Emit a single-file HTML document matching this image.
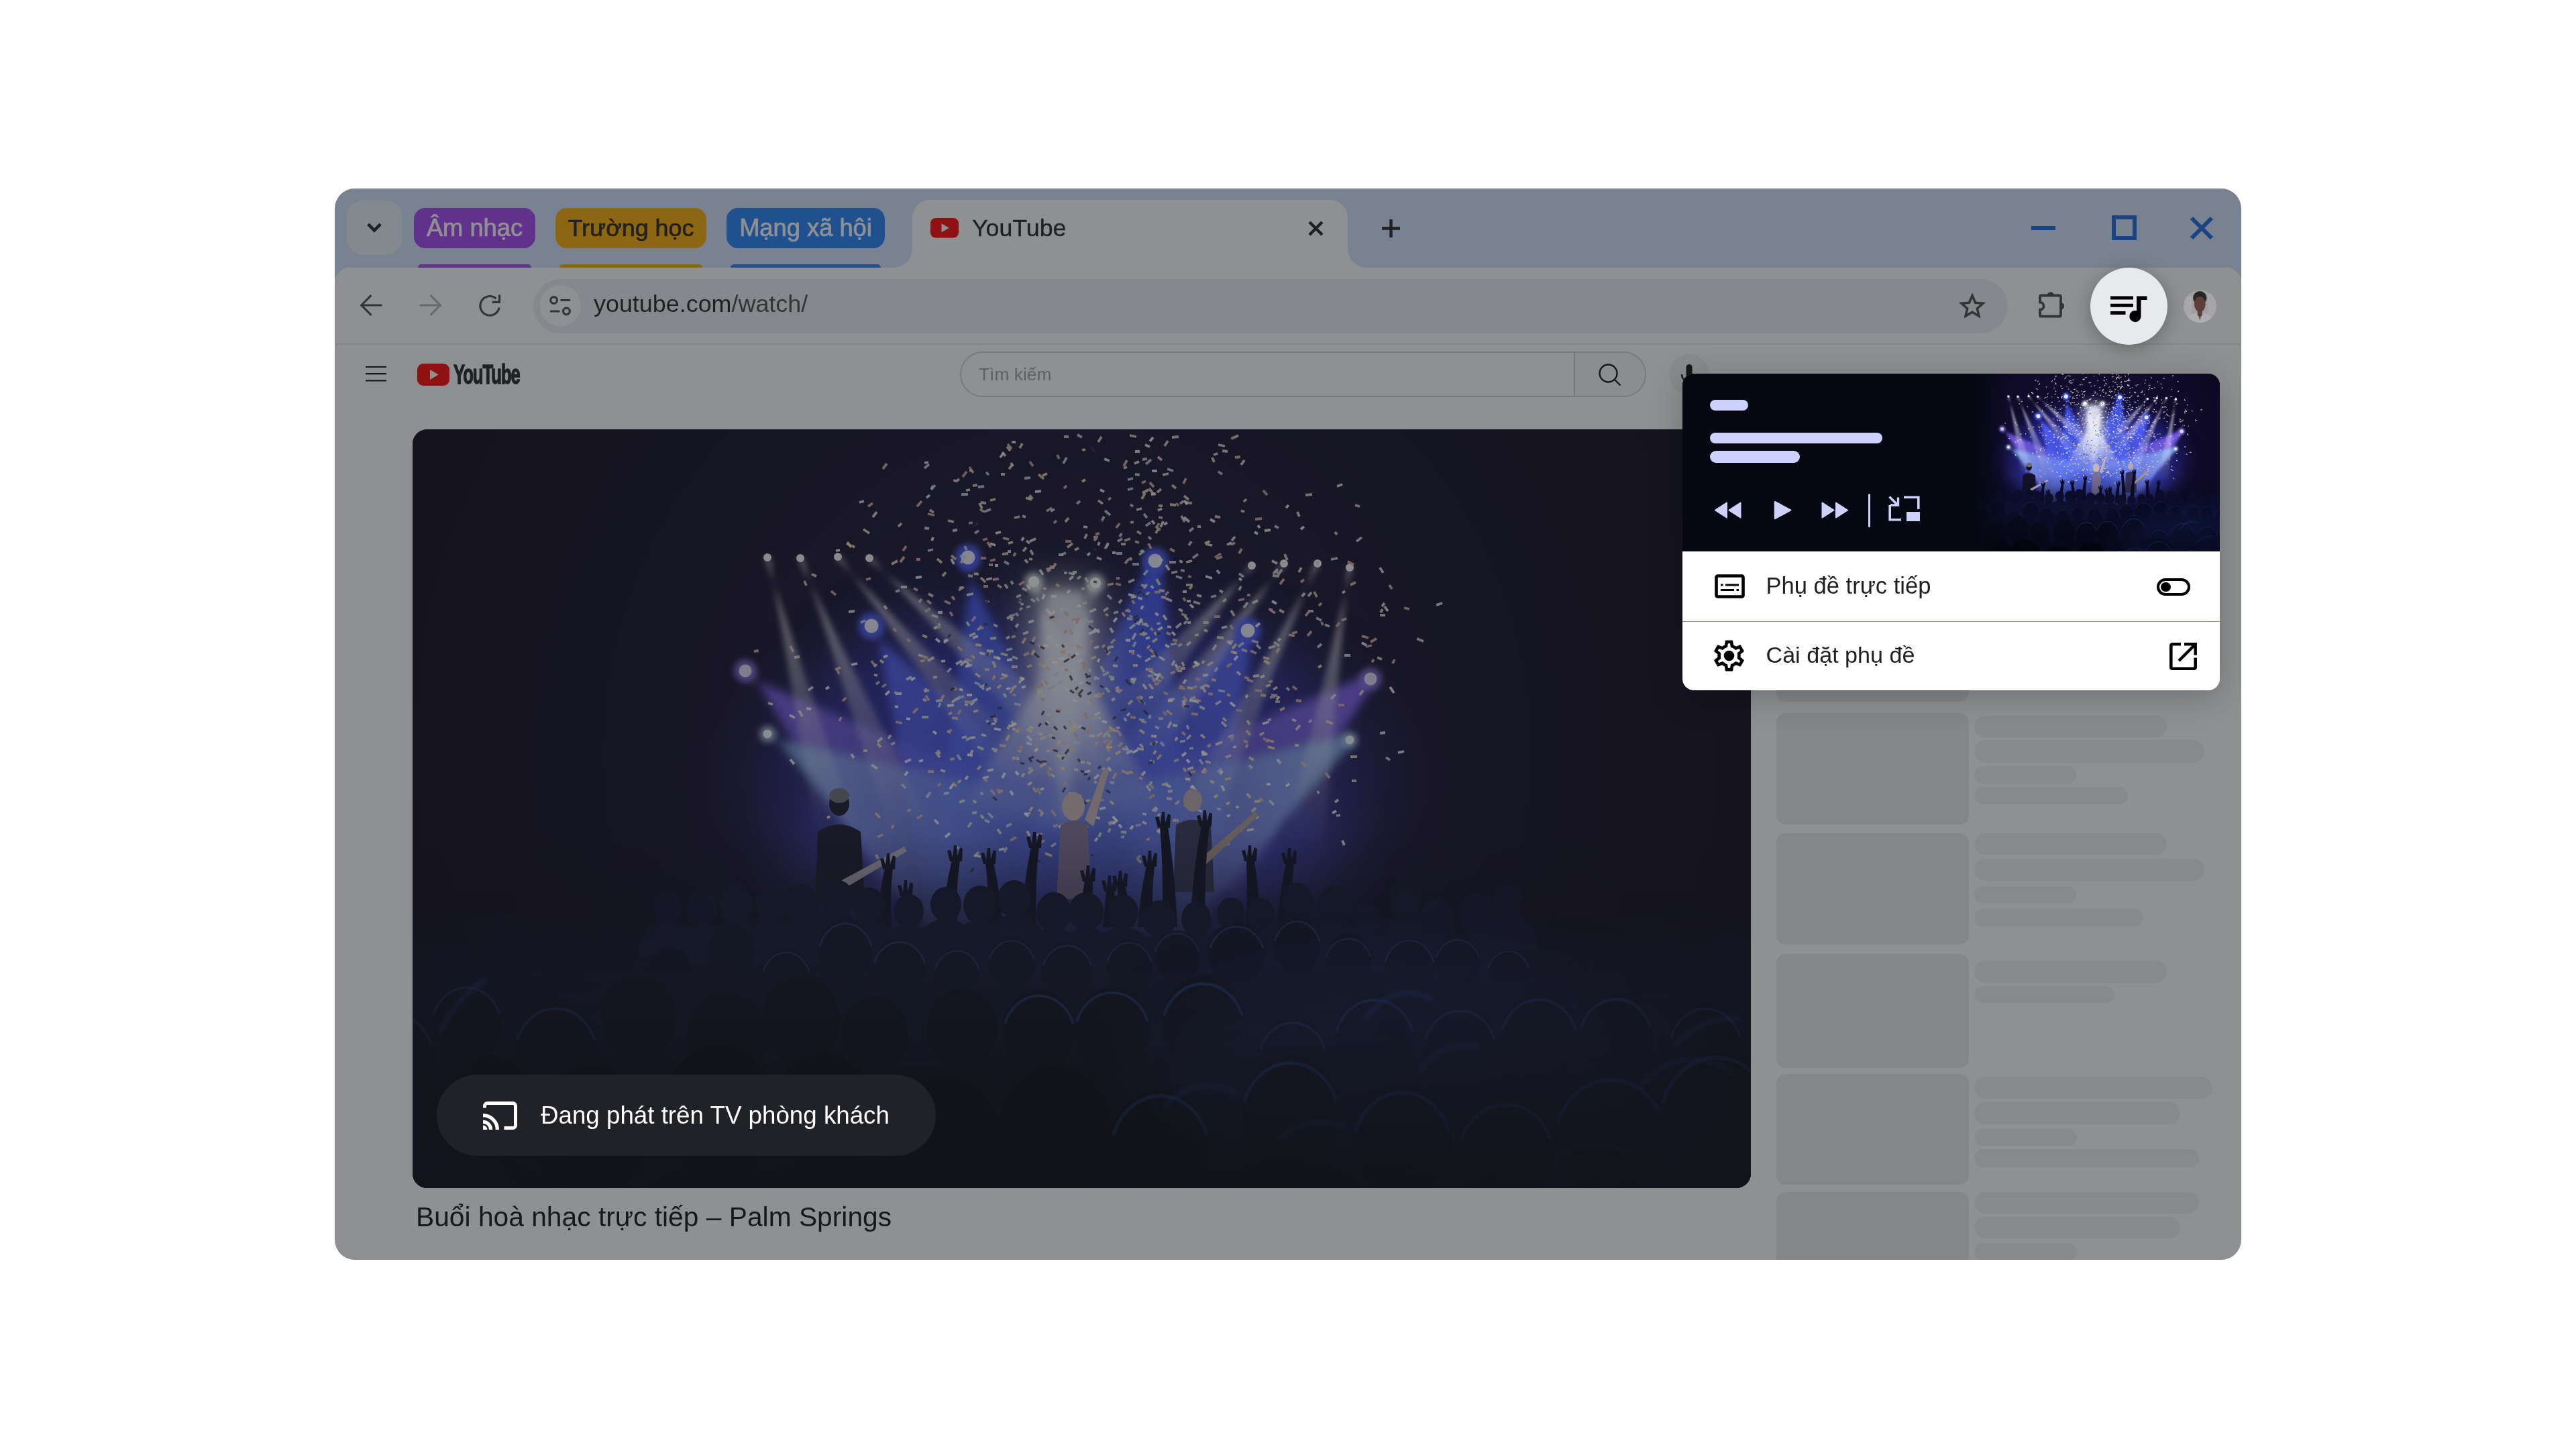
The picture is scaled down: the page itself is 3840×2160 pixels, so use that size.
<!DOCTYPE html>
<html lang="vi"><head><meta charset="utf-8"><title>YouTube</title>
<style>
*{box-sizing:border-box;margin:0;padding:0}
html,body{width:3840px;height:2160px;overflow:hidden;background:#fff}
body{position:relative;font-family:"Liberation Sans",sans-serif;color:#1f1f1f}
.abs{position:absolute}
svg{position:absolute;overflow:visible}
.win{position:absolute;left:499px;top:281px;width:2842px;height:1597px;border-radius:30px;overflow:hidden;background:#d3e3fd}
.in{position:absolute;left:-499px;top:-281px;width:3840px;height:2160px}
.scrim{position:absolute;left:0;top:0;width:100%;height:100%;background:rgba(32,33,36,.5)}
.t{position:absolute;white-space:nowrap;line-height:1}
.chip{position:absolute;top:310px;height:60px;border-radius:17px;text-align:center;font-size:36.3px;line-height:60px;white-space:nowrap;-webkit-text-stroke:.7px currentColor}
.ul{position:absolute;top:393.5px;height:12px;border-radius:5px}
.sk{position:absolute;background:#eaeaea;border-radius:14px}
.sb{position:absolute;background:#f1f1f1;border-radius:12px}

</style></head><body>
<svg width="0" height="0" style="position:absolute"><defs><filter id="b6" x="-30%" y="-30%" width="160%" height="160%"><feGaussianBlur stdDeviation="5"/></filter><filter id="b10" x="-20%" y="-20%" width="140%" height="140%"><feGaussianBlur stdDeviation="7"/></filter><filter id="b30" x="-30%" y="-30%" width="160%" height="160%"><feGaussianBlur stdDeviation="30"/></filter><filter id="b50" x="-30%" y="-30%" width="160%" height="160%"><feGaussianBlur stdDeviation="50"/></filter><filter id="b3" x="-50%" y="-50%" width="200%" height="200%"><feGaussianBlur stdDeviation="3"/></filter><radialGradient id="cg2" cx="975" cy="480" r="1150" gradientUnits="userSpaceOnUse"><stop offset="0" stop-color="#17123a"/><stop offset=".5" stop-color="#0f0a27"/><stop offset="1" stop-color="#0a0619"/></radialGradient><linearGradient id="fadeb" x1="0" y1="600" x2="0" y2="900" gradientUnits="userSpaceOnUse"><stop offset="0" stop-color="#060716" stop-opacity="0"/><stop offset="1" stop-color="#060716" stop-opacity=".8"/></linearGradient><radialGradient id="vg" cx="985" cy="470" r="1100" gradientUnits="userSpaceOnUse"><stop offset=".5" stop-color="#07051a" stop-opacity="0"/><stop offset="1" stop-color="#07051a" stop-opacity=".5"/></radialGradient><linearGradient id="g1" x1="496" y1="360" x2="863" y2="643" gradientUnits="userSpaceOnUse"><stop offset="0" stop-color="#7050f0" stop-opacity="1"/><stop offset="0.5" stop-color="#7050f0" stop-opacity="0.55"/><stop offset="1" stop-color="#7050f0" stop-opacity="0"/></linearGradient><linearGradient id="g2" x1="1428" y1="372" x2="1073" y2="639" gradientUnits="userSpaceOnUse"><stop offset="0" stop-color="#7050f0" stop-opacity="1"/><stop offset="0.5" stop-color="#7050f0" stop-opacity="0.55"/><stop offset="1" stop-color="#7050f0" stop-opacity="0"/></linearGradient><linearGradient id="g3" x1="684" y1="293" x2="918" y2="667" gradientUnits="userSpaceOnUse"><stop offset="0" stop-color="#3848ff" stop-opacity="1"/><stop offset="0.5" stop-color="#3848ff" stop-opacity="0.60"/><stop offset="1" stop-color="#3848ff" stop-opacity="0"/></linearGradient><linearGradient id="g4" x1="1245" y1="300" x2="1042" y2="659" gradientUnits="userSpaceOnUse"><stop offset="0" stop-color="#3848ff" stop-opacity="1"/><stop offset="0.5" stop-color="#3848ff" stop-opacity="0.60"/><stop offset="1" stop-color="#3848ff" stop-opacity="0"/></linearGradient><linearGradient id="g5" x1="828" y1="191" x2="919" y2="726" gradientUnits="userSpaceOnUse"><stop offset="0" stop-color="#2c48ff" stop-opacity="1"/><stop offset="0.5" stop-color="#2c48ff" stop-opacity="0.60"/><stop offset="1" stop-color="#2c48ff" stop-opacity="0"/></linearGradient><linearGradient id="g6" x1="1107" y1="196" x2="1016" y2="724" gradientUnits="userSpaceOnUse"><stop offset="0" stop-color="#2c48ff" stop-opacity="1"/><stop offset="0.5" stop-color="#2c48ff" stop-opacity="0.60"/><stop offset="1" stop-color="#2c48ff" stop-opacity="0"/></linearGradient><linearGradient id="g7" x1="529" y1="454" x2="961" y2="686" gradientUnits="userSpaceOnUse"><stop offset="0" stop-color="#78b0f0" stop-opacity="0.9"/><stop offset="0.4" stop-color="#78b0f0" stop-opacity="0.41"/><stop offset="1" stop-color="#78b0f0" stop-opacity="0"/></linearGradient><linearGradient id="g8" x1="1397" y1="463" x2="970" y2="684" gradientUnits="userSpaceOnUse"><stop offset="0" stop-color="#78b0f0" stop-opacity="0.9"/><stop offset="0.4" stop-color="#78b0f0" stop-opacity="0.41"/><stop offset="1" stop-color="#78b0f0" stop-opacity="0"/></linearGradient><linearGradient id="g9" x1="926" y1="227" x2="1052" y2="598" gradientUnits="userSpaceOnUse"><stop offset="0" stop-color="#f0f5ff" stop-opacity="1"/><stop offset="0.5" stop-color="#f0f5ff" stop-opacity="0.65"/><stop offset="1" stop-color="#f0f5ff" stop-opacity="0"/></linearGradient><linearGradient id="g10" x1="1018" y1="229" x2="888" y2="597" gradientUnits="userSpaceOnUse"><stop offset="0" stop-color="#f0f5ff" stop-opacity="1"/><stop offset="0.5" stop-color="#f0f5ff" stop-opacity="0.65"/><stop offset="1" stop-color="#f0f5ff" stop-opacity="0"/></linearGradient><linearGradient id="g11" x1="529" y1="191" x2="632" y2="599" gradientUnits="userSpaceOnUse"><stop offset="0" stop-color="#ece8f4" stop-opacity="0.85"/><stop offset="0.5" stop-color="#ece8f4" stop-opacity="0.38"/><stop offset="1" stop-color="#ece8f4" stop-opacity="0"/></linearGradient><linearGradient id="g12" x1="578" y1="192" x2="742" y2="598" gradientUnits="userSpaceOnUse"><stop offset="0" stop-color="#ece8f4" stop-opacity="0.85"/><stop offset="0.5" stop-color="#ece8f4" stop-opacity="0.38"/><stop offset="1" stop-color="#ece8f4" stop-opacity="0"/></linearGradient><linearGradient id="g13" x1="634" y1="190" x2="891" y2="499" gradientUnits="userSpaceOnUse"><stop offset="0" stop-color="#ece8f4" stop-opacity="0.85"/><stop offset="0.5" stop-color="#ece8f4" stop-opacity="0.38"/><stop offset="1" stop-color="#ece8f4" stop-opacity="0"/></linearGradient><linearGradient id="g14" x1="681" y1="192" x2="954" y2="447" gradientUnits="userSpaceOnUse"><stop offset="0" stop-color="#ece8f4" stop-opacity="0.85"/><stop offset="0.5" stop-color="#ece8f4" stop-opacity="0.38"/><stop offset="1" stop-color="#ece8f4" stop-opacity="0"/></linearGradient><linearGradient id="g15" x1="1397" y1="206" x2="1328" y2="625" gradientUnits="userSpaceOnUse"><stop offset="0" stop-color="#ece8f4" stop-opacity="0.85"/><stop offset="0.5" stop-color="#ece8f4" stop-opacity="0.38"/><stop offset="1" stop-color="#ece8f4" stop-opacity="0"/></linearGradient><linearGradient id="g16" x1="1349" y1="200" x2="1167" y2="585" gradientUnits="userSpaceOnUse"><stop offset="0" stop-color="#ece8f4" stop-opacity="0.85"/><stop offset="0.5" stop-color="#ece8f4" stop-opacity="0.38"/><stop offset="1" stop-color="#ece8f4" stop-opacity="0"/></linearGradient><linearGradient id="g17" x1="1299" y1="200" x2="1083" y2="483" gradientUnits="userSpaceOnUse"><stop offset="0" stop-color="#ece8f4" stop-opacity="0.85"/><stop offset="0.5" stop-color="#ece8f4" stop-opacity="0.38"/><stop offset="1" stop-color="#ece8f4" stop-opacity="0"/></linearGradient><linearGradient id="g18" x1="1251" y1="203" x2="1059" y2="429" gradientUnits="userSpaceOnUse"><stop offset="0" stop-color="#ece8f4" stop-opacity="0.85"/><stop offset="0.5" stop-color="#ece8f4" stop-opacity="0.38"/><stop offset="1" stop-color="#ece8f4" stop-opacity="0"/></linearGradient><linearGradient id="fun" x1="0" y1="225" x2="0" y2="540" gradientUnits="userSpaceOnUse"><stop offset="0" stop-color="#f4f7ff" stop-opacity=".95"/><stop offset=".5" stop-color="#e3e9ff" stop-opacity=".65"/><stop offset="1" stop-color="#c5ccff" stop-opacity="0"/></linearGradient><linearGradient id="g19" x1="0" y1="720" x2="0" y2="900" gradientUnits="userSpaceOnUse"><stop offset="0" stop-color="#2a3a8a" stop-opacity="0"/><stop offset=".5" stop-color="#2a3a8a" stop-opacity="0.1"/><stop offset="1" stop-color="#2a3a8a" stop-opacity="0"/></linearGradient><linearGradient id="g20" x1="0" y1="800" x2="0" y2="1000" gradientUnits="userSpaceOnUse"><stop offset="0" stop-color="#22357a" stop-opacity="0"/><stop offset=".5" stop-color="#22357a" stop-opacity="0.08"/><stop offset="1" stop-color="#22357a" stop-opacity="0"/></linearGradient><linearGradient id="g21" x1="0" y1="930" x2="0" y2="1100" gradientUnits="userSpaceOnUse"><stop offset="0" stop-color="#1a2a66" stop-opacity="0"/><stop offset=".5" stop-color="#1a2a66" stop-opacity="0.06"/><stop offset="1" stop-color="#1a2a66" stop-opacity="0"/></linearGradient><linearGradient id="botd" x1="0" y1="820" x2="0" y2="1131" gradientUnits="userSpaceOnUse"><stop offset="0" stop-color="#02030a" stop-opacity="0"/><stop offset="1" stop-color="#02030a" stop-opacity=".7"/></linearGradient></defs><symbol id="concert" viewBox="0 0 1995 1131"><rect width="1995" height="1131" fill="url(#cg2)"/>
<ellipse cx="975" cy="520" rx="470" ry="250" fill="#3430b0" opacity=".45" filter="url(#b50)"/>
<ellipse cx="975" cy="610" rx="400" ry="110" fill="#4a5cf0" opacity=".5" filter="url(#b50)"/>
<ellipse cx="800" cy="440" rx="190" ry="150" fill="#2a38d8" opacity=".4" filter="url(#b50)"/><ellipse cx="1150" cy="445" rx="190" ry="150" fill="#2a38d8" opacity=".4" filter="url(#b50)"/>
<g filter="url(#b10)" style="mix-blend-mode:screen"><polygon points="491,366 1018,588 708,698 501,354" fill="url(#g1)"/><polygon points="1423,366 917,584 1228,694 1433,378" fill="url(#g2)"/><polygon points="677,297 1070,642 766,692 691,289" fill="url(#g3)"/><polygon points="1238,296 890,634 1195,684 1252,304" fill="url(#g4)"/><polygon points="819,193 1073,726 764,726 837,189" fill="url(#g5)"/><polygon points="1098,194 862,724 1171,724 1116,198" fill="url(#g6)"/><polygon points="526,460 1122,589 800,783 532,448" fill="url(#g7)"/><polygon points="1394,457 809,591 1131,776 1400,469" fill="url(#g8)"/><polygon points="918,230 1136,598 968,598 934,224" fill="url(#g9)"/><polygon points="1010,226 976,597 800,597 1026,232" fill="url(#g10)"/></g>
<polygon points="945,240 1000,241 1030,520 915,520" fill="url(#fun)" filter="url(#b10)" opacity=".8"/>
<g filter="url(#b6)" style="mix-blend-mode:screen"><polygon points="526,192 661,592 603,607 532,190" fill="url(#g11)"/><polygon points="575,193 770,586 714,609 581,191" fill="url(#g12)"/><polygon points="632,192 914,480 868,519 636,188" fill="url(#g13)"/><polygon points="679,194 974,425 934,469 683,190" fill="url(#g14)"/><polygon points="1394,206 1358,629 1298,620 1400,206" fill="url(#g15)"/><polygon points="1346,199 1194,598 1140,572 1352,201" fill="url(#g16)"/><polygon points="1297,198 1107,502 1059,465 1301,202" fill="url(#g17)"/><polygon points="1249,201 1081,449 1036,410 1253,205" fill="url(#g18)"/></g>
<polygon points="932,235 1012,237 1060,590 885,590" fill="url(#fun)" filter="url(#b30)"/>
<circle cx="529" cy="191" r="6" fill="#f4f0f4"/><circle cx="578" cy="192" r="6" fill="#f4f0f4"/><circle cx="634" cy="190" r="6" fill="#f4f0f4"/><circle cx="681" cy="192" r="6" fill="#f4f0f4"/><circle cx="1251" cy="203" r="6" fill="#f4f0f4"/><circle cx="1299" cy="200" r="6" fill="#f4f0f4"/><circle cx="1349" cy="200" r="6" fill="#f4f0f4"/><circle cx="1397" cy="206" r="6" fill="#f4f0f4"/><circle cx="828" cy="191" r="20" fill="#4a5cff" opacity=".9" filter="url(#b6)"/><circle cx="828" cy="191" r="10.5" fill="#e6ebff"/><circle cx="1107" cy="196" r="20" fill="#4a5cff" opacity=".9" filter="url(#b6)"/><circle cx="1107" cy="196" r="10.5" fill="#e6ebff"/><circle cx="684" cy="293" r="20" fill="#4a5cff" opacity=".9" filter="url(#b6)"/><circle cx="684" cy="293" r="10.5" fill="#e6ebff"/><circle cx="1245" cy="300" r="20" fill="#4a5cff" opacity=".9" filter="url(#b6)"/><circle cx="1245" cy="300" r="10.5" fill="#e6ebff"/><circle cx="926" cy="227" r="14" fill="#fff" opacity=".7" filter="url(#b6)"/><circle cx="926" cy="227" r="8" fill="#fff"/><circle cx="1018" cy="229" r="14" fill="#fff" opacity=".7" filter="url(#b6)"/><circle cx="1018" cy="229" r="8" fill="#fff"/><circle cx="496" cy="360" r="17" fill="#8a78e8" opacity=".8" filter="url(#b6)"/><circle cx="496" cy="360" r="9.5" fill="#ddd6f6"/><circle cx="1428" cy="372" r="17" fill="#8a78e8" opacity=".8" filter="url(#b6)"/><circle cx="1428" cy="372" r="9.5" fill="#ddd6f6"/><circle cx="529" cy="454" r="12" fill="#cfe6fa" opacity=".7" filter="url(#b6)"/><circle cx="529" cy="454" r="6.5" fill="#eef6fd"/><circle cx="1397" cy="463" r="12" fill="#cfe6fa" opacity=".7" filter="url(#b6)"/><circle cx="1397" cy="463" r="6.5" fill="#eef6fd"/>
<path d="M1053 259l4 -5M1386 244l4 -3M867 431l3 6M974 389l6 2M1221 166l5 -6M1040 373l6 -1M768 345l9 -5M979 224l6 -5M703 263l4 5M985 344l5 -8M1044 352l7 1M1389 337l9 -0M845 110l4 8M806 76l5 1M886 282l8 -4M754 336l6 2M1173 627l9 -5M1042 404l5 -3M688 366l5 1M825 91l6 -1M1126 445l5 -9M830 308l9 -4M887 447l4 -7M1123 252l9 4M1110 597l4 5M845 384l9 -3M913 194l4 5M1103 569l6 -6M1244 598l10 -2M693 466l7 -6M1252 259l8 -4M946 426l5 -1M915 166l5 4M815 556l8 -3M916 599l4 7M893 354l9 -0M1442 206l5 8M983 446l7 -6M787 508l7 2M888 170l7 -2M569 340l8 -1M1088 95l9 -5M1080 476l10 1M1276 326l10 -3M919 444l7 1M1030 459l3 -5M1020 191l7 3M976 321l5 2M995 495l7 2M1022 173l2 -5M823 410l5 1M1214 577l5 -2M915 573l6 -1M1107 570l3 -6M910 305l8 -3M1143 196l5 2M933 394l6 -5M1118 68l9 -2M672 149l9 6M1206 436l7 7M1148 406l4 3M832 484l3 -6M917 530l6 -4M1319 123l3 7M1207 32l8 1M848 455l7 2M736 373l8 -4M1235 53l5 -7M1154 322l6 -5M848 382l3 6M823 346l6 2M856 330l10 1M1177 608l8 -6M618 579l4 -2M1194 38l6 -2M1369 402l7 -7M1088 573l6 1M1017 614l4 -5M1199 210l4 5M909 129l5 2M1092 346l8 -5M1197 470l10 -4M978 214l9 2M1147 407l7 -4M965 271l4 -5M1253 368l9 -1M959 337l5 6M819 460l7 -2M1079 120l8 -2M1106 469l4 -4M1180 299l5 2M1147 347l3 6M1445 264l4 -5M1111 121l6 -3M1088 585l6 3M776 370l6 -1M899 295l4 -5M855 389l7 -4M866 339l9 3M576 419l5 9M686 131l6 -8M1223 333l5 0M986 507l6 1M892 50l3 5M1099 494l7 2M1009 457l8 0M948 341l9 5M877 67l6 0M1132 12l10 -1M1123 202l5 8M590 389l7 -5M961 486l6 2M1009 272l10 -4M530 408l7 2M1073 313l5 -9M978 543l8 -0M855 224l9 -2M1155 507l9 -3M1101 233l3 4M1159 588l4 7M1078 288l6 3M1229 361l5 5" stroke="#f2e9e4" stroke-width="3.8" opacity=".85" fill="none"/>
<path d="M921 180l4 7M987 180l6 -3M946 305l5 -3M945 480l5 -1M1144 111l5 -4M1182 495l8 2M1178 385l4 7M1008 361l3 -4M1283 388l6 -4M1097 357l8 7M1212 489l8 -3M761 402l5 3M963 288l9 -4M1098 380l6 7M1292 269l7 4M1064 269l6 3M1131 214l9 -2M763 391l7 -2M1048 389l7 3M1046 450l6 -1M1175 455l6 5M971 11l7 -0M1032 178l5 -7M655 173l4 3M954 207l5 -7M1022 106l7 5M714 201l9 -5M1017 301l7 -2M1269 345l8 5M1300 186l4 9M813 527l4 -4M1116 250l7 1M1111 41l6 5M936 462l9 -4M1196 130l8 1M1192 42l3 7M792 543l8 -1M1220 331l9 3M919 193l5 1M780 481l6 8M879 34l5 6M1087 290l8 1M1193 329l5 -8M1443 273l3 -5M1098 88l6 8M1014 299l5 4M863 439l6 -0M964 349l7 3M936 576l4 -5M980 322l6 -2M939 322l8 6M1163 355l7 -5M1084 469l5 5M1022 19l5 -8M1080 152l6 4M1145 210l6 1M1290 217l6 -8M1018 399l9 -2M1126 540l7 -1M810 78l5 -4M1154 462l6 -6M724 145l5 -5M918 513l7 -6M1497 312l10 4M1105 484l3 -5M1088 307l7 -3M999 260l6 -2M1239 108l4 -4M1223 13l8 -4M1054 160l3 -5M935 503l9 -5M970 324l4 6M1168 593l3 4M1349 325l6 -5M1157 173l4 -6M854 257l6 -1M1177 512l5 -7M815 237l5 -2M900 250l7 -3M1041 449l6 -2M812 403l4 -5M1110 94l6 -5M1132 83l6 5M1069 191l3 4M1098 531l4 -6M1020 458l8 -6M1405 113l7 2M1208 430l5 5M948 455l7 3M1150 99l7 6M595 216l7 3M1283 215l7 -7M1214 317l9 -1M1377 576l6 -1M1109 580l5 -7M965 332l8 4M893 387l7 -5M1088 45l7 -1M1146 129l5 9M798 136l9 2M1005 496l6 3M908 518l4 -5M956 369l3 -4M1140 360l7 -0M1335 271l8 0M835 84l7 -1M939 69l7 -3M1124 550l8 1M1016 373l5 -3M1128 198l10 0M771 120l6 4M1016 525l4 2" stroke="#f5d9d0" stroke-width="3.8" opacity=".85" fill="none"/>
<path d="M872 232l6 4M1137 559l6 -5M1288 333l4 -7M1306 306l9 2M1243 449l6 7M584 226l3 7M1110 492l6 -7M804 430l9 1M1398 232l8 -4M880 162l9 2M875 471l10 1M1264 396l8 1M1113 364l6 8M947 387l9 -3M846 119l6 4M853 358l7 -0M902 479l6 1M1095 327l4 -5M924 317l4 -8M1084 405l8 4M990 322l7 5M1109 146l6 4M1220 172l6 -3M828 218l7 1M1034 494l6 -5M1280 396l9 1M891 393l5 -8M814 240l8 -5M648 168l6 8M1068 511l6 1M859 202l6 0M1191 373l7 1M948 504l5 4M933 67l8 7M893 310l6 -2M1226 42l8 -1M690 572l7 7M805 527l6 5M1018 471l3 -5M755 258l4 -5M1058 273l4 6M1124 419l8 6M1099 328l8 7M959 231l5 3M1015 161l7 -1M1112 131l6 1M925 534l5 7M1036 472l6 -8M1133 583l9 0M1016 166l4 -4M701 59l6 -8M1015 571l4 5M995 277l4 4M1456 232l4 6M990 392l4 4M909 319l5 -8M920 101l5 2M1111 374l5 2M1232 185l4 -7M1033 275l4 3M978 434l5 7M1133 314l7 1M1211 522l9 -2M943 353l6 6M1214 395l5 2M799 425l5 -3M1028 325l4 -4M757 346l7 -2M727 198l6 -8M1351 263l4 -4M1166 403l9 2M563 323l5 9M1278 269l8 5M1344 242l4 8M1242 474l3 -4M1080 640l6 6M1271 345l7 4M803 188l7 6M851 234l7 0M1152 109l10 1M905 269l4 -3M1041 319l6 -6M630 358l8 -3M916 354l7 -2M1293 419l7 -4M765 397l5 7M1062 200l6 -7M1064 514l8 -4M1149 505l4 5M1057 509l8 3M639 556l9 1M1008 431l5 0M967 330l6 3M977 335l6 6M1018 156l6 -1M1077 167l6 2M1061 166l9 -3M1103 370l4 7M1274 463l10 3M1112 431l7 0M1185 473l5 -3M945 122l8 -5M1086 435l8 2M760 338l8 3M823 406l10 1M933 567l6 4M1278 400l8 -2M978 476l9 3M1036 232l9 -2M979 297l5 9M1037 601l3 -6M833 337l5 4M934 349l7 4" stroke="#e8c8a8" stroke-width="3.8" opacity=".85" fill="none"/>
<path d="M773 89l3 -5M763 147l7 1M1094 531l6 8M1239 266l6 -8M1257 580l4 -3M964 491l8 -6M797 450l5 2M1117 530l9 -2M1174 386l9 -5M1400 524l7 -0M991 223l5 -4M1177 349l3 -4M1058 476l9 2M1121 25l5 -8M1331 98l10 -1M1277 553l7 7M1335 249l5 -6M837 637l7 -7M1056 600l8 1M1258 321l6 6M930 399l6 -7M922 253l6 4M1045 274l7 -2M1317 448l6 -7M1022 429l4 3M836 553l4 4M1034 176l3 -7M1197 410l8 -5M893 435l4 7M892 226l3 5M1101 339l7 -2M1442 277l8 -0M1451 489l6 4M1026 353l5 9M1060 58l5 -2M861 312l9 -1M1004 405l7 4M783 478l3 6M1085 183l4 -3M709 461l4 -5M780 405l10 -1M980 376l4 -4M826 287l4 6M1067 228l9 -4M697 344l5 4M1048 387l5 -3M1360 291l7 3M1027 137l4 -7M1173 413l8 4M847 575l4 5M933 454l7 1M894 339l8 3M1247 501l5 4M1003 221l4 7M1038 368l8 3M866 479l5 1M1077 67l7 1M774 277l9 3M881 394l4 5M1070 373l9 -1M1155 288l5 0M1092 290l5 4M1344 199l7 -0M961 378l9 1M1033 331l5 -6M1150 290l4 -4M1138 296l8 -7M1159 402l8 -3M1407 167l8 -6M1006 232l6 8M1284 317l8 6M825 463l9 -4M1311 432l6 3M1034 451l6 8M1069 297l8 -6M1369 194l10 -2M1201 23l10 2M941 412l9 4M909 237l7 3M1037 325l8 -1M863 476l9 2M834 572l7 -1M1000 290l5 -8M1005 287l10 -1M945 209l9 -3M759 429l10 -0M940 355l7 -7M1071 374l5 5M1282 218l10 1M1023 608l3 -7M1033 385l6 7M1151 278l5 6M1091 248l7 -5M910 182l5 -6M847 109l8 1M1083 406l5 -8M688 354l4 -4M842 473l9 4M1113 240l8 1M1232 240l3 -6M1375 153l3 4M1002 163l3 -7M1203 240l5 3M769 245l7 4M942 378l5 5M1061 430l3 5M938 399l8 -3M985 446l8 -1" stroke="#d6e8d8" stroke-width="3.8" opacity=".85" fill="none"/>
<path d="M971 384l7 5M1064 483l9 -4M1081 251l7 2M666 109l7 -2M1068 331l8 -0M920 167l9 -4M1132 352l4 -7M984 404l7 1M940 326l4 -6M1273 529l6 0M1107 274l5 3M1065 427l4 -4M918 288l8 -3M1149 379l4 -6M783 273l7 -0M777 297l6 -3M1176 485l9 -1M1326 249l4 -5M1115 146l4 -9M1169 247l7 2M963 187l7 0M654 484l4 6M1119 277l5 7M1214 172l7 -3M935 209l5 8M1016 578l9 2M810 350l9 -5M1102 136l4 5M1159 261l5 5M991 347l7 -4M1024 566l9 -2M916 457l7 7M766 102l5 -4M1442 453l8 -1M804 407l8 -6M1072 371l5 5M778 582l6 6M1165 405l7 2M1053 589l4 5M915 467l8 3M850 520l9 -2M1160 535l3 -4M826 247l10 -2M824 522l4 -5M1206 296l8 -2M1113 192l5 4M824 354l10 -3M1378 85l8 -3M1264 370l6 -3M892 285l3 -5M1031 44l8 3M1375 556l5 -4M908 166l3 -5M1281 196l8 4M1076 51l7 -3M1016 297l8 6M903 258l4 -5M734 496l9 -4M1111 299l7 -4M1148 242l6 -0M1016 521l7 -6M1123 530l7 3M887 182l5 -0M1206 531l4 8M1133 441l7 1M1029 505l4 3M1089 380l5 7M833 460l6 -1M1087 516l5 -6M1242 400l3 -4M1181 170l5 -2M702 340l6 -3M1165 346l6 7M720 394l9 0M805 151l7 -1M1216 318l5 2M1223 474l5 -1M939 376l6 5M984 213l6 -0M832 411l5 -5M684 500l9 6M981 595l5 4M562 426l8 4M1016 426l9 -4M908 385l6 -2M1086 268l3 -5M945 312l7 -4M834 406l8 -4M1186 172l6 1M650 272l9 -1M1021 347l3 -5M1125 294l6 1M1168 586l6 -4M1152 521l7 1M845 333l8 2M1102 62l8 0M984 548l6 -6M1016 326l7 -2M963 593l8 -4M993 443l6 0M1006 188l4 -4M893 19l6 0M1290 315l4 -3M1120 142l5 -3M857 509l9 -2M1137 464l3 -5M763 50l6 -1M1289 492l5 6M868 203l5 0M1267 439l10 -3M1071 251l8 -2M981 359l6 2M1040 296l4 7M1000 145l6 1M817 352l7 -7M904 378l7 -8M1178 367l8 -1M1154 256l6 0M1101 457l8 1M878 365l9 3M1142 268l6 3M1093 357l9 4M1260 143l3 4M728 235l9 0M1113 339l8 5" stroke="#f3f3f3" stroke-width="3.8" opacity=".85" fill="none"/>
<path d="M959 418l8 0M984 596l8 -4M1037 105l4 -3M767 255l6 5M1106 380l7 -1M1049 147l5 -7M1186 394l7 1M1097 170l4 8M1094 612l5 -2M1008 443l6 3M1331 278l5 -6M691 380l5 -4M676 224l7 -2M971 88l4 -4M1038 589l8 -3M804 249l4 5M952 282l8 -4M1073 255l3 5M955 592l7 -2M1394 197l9 5M1430 347l3 -4M1052 450l4 7M1083 519l5 2M693 608l8 -4M1180 513l4 -5M1146 275l8 3M865 373l3 -6M1130 364l7 -3M857 168l5 8M1286 406l7 -0M1276 377l6 -2M1051 389l7 0M956 140l4 -4M641 405l5 -5M1149 81l4 -8M852 522l5 2M1144 382l5 3M872 536l4 7M1317 404l8 1M752 115l7 -8M834 286l5 -7M1385 285l7 -3M714 595l3 -5M1035 473l3 7M1256 134l10 -1M1334 308l6 -7M1030 467l7 -5M1415 308l10 3M1129 178l7 4M950 204l7 2M1052 473l6 -6M1060 55l5 -9M876 372l8 -3M1461 349l3 -6M1099 79l6 7M1311 304l8 -2M1124 303l6 3M932 320l6 6M793 256l9 4M983 445l8 5M801 492l7 -1M911 337l8 -4M889 279l9 -3M1100 296l4 4M1161 424l10 1M1147 451l5 5M1244 247l5 -0M636 435l3 -6M1428 317l9 -5M1249 330l9 4M1325 496l7 7M679 115l7 -5M787 405l5 -9M865 224l9 -1M933 617l9 -4M717 297l4 4M746 423l7 -7M1135 495l7 -3M1035 451l8 -4M751 194l6 0M968 466l6 4M731 181l5 -7M509 331l7 -1M1244 373l9 3M1011 402l3 6M1078 591l8 -2M1198 193l9 -3M684 345l5 7M1239 464l6 3M940 492l5 3M1221 15l2 -4M1122 247l5 -5M737 569l6 -2M874 539l6 -0M824 343l10 2M1178 480l6 4M896 189l3 -5M1160 387l9 -4M747 237l6 3M1478 266l8 2M1036 336l4 -5M1210 616l8 3M1044 521l5 -9M1324 228l5 -4M829 140l6 -1M1293 231l6 -8M946 212l5 -3M887 22l6 7M1108 147l5 -7M768 510l9 0" stroke="#e6b8b0" stroke-width="3.8" opacity=".85" fill="none"/>
<path d="M1083 187l8 -6M885 329l9 -2M858 572l7 7M1074 324l4 -7M766 549l6 -8M1173 492l5 7M668 288l7 -3M1126 403l10 -1M970 51l5 -9M1125 59l9 3M1013 433l7 -6M1144 466l8 -2M1066 90l8 -2M1201 63l6 4M713 470l6 -3M1303 385l4 4M729 529l6 6M855 434l5 3M855 64l4 4M995 279l4 -4M901 452l3 -6M838 377l8 4M1032 121l8 7M951 122l6 -3M1163 192l8 -6M1080 336l6 4M1196 361l4 -6M882 630l4 -7M792 315l7 -1M1107 443l6 3M1056 608l5 -1M853 582l7 4M1066 75l8 -2M1096 368l8 -1M971 214l5 0M885 592l8 -4M773 90l6 -7M1130 321l9 -2M1231 324l8 -6M1070 112l4 3M763 58l7 -6M812 401l10 -3M952 622l7 -5M812 485l5 8M1090 217l6 -7M1232 215l7 5M964 379l4 -5M1065 282l8 1M1109 367l6 -3M809 622l8 4M1115 466l5 6M1121 622l8 -1M1015 369l9 3M1216 459l8 -3M899 274l4 4M1154 441l3 6M1083 432l8 2M955 368l8 -5M1073 201l10 0M1141 323l6 -3M843 86l9 -1M994 630l5 -6M1037 587l7 -2M985 467l10 0M768 181l8 -2M918 506l5 -1M1090 126l5 6M1201 389l10 2M1093 144l7 -5M912 73l9 -1M1138 219l9 3M1158 476l6 -1M1098 431l2 -5M915 265l6 -1M1093 52l8 -7M1190 250l8 -2M816 189l9 2M784 414l3 -6M784 289l2 4M1097 160l4 4M981 269l6 -4M1036 247l6 6M1200 511l6 -5M1063 472l5 9M1236 328l8 3M847 541l3 4M1285 211l5 3M1049 445l5 -0M906 260l5 1M1158 152l6 -5M720 242l6 -2M1251 315l10 3M866 291l6 3M823 174l3 6M1275 434l5 -2M882 197l7 4M1029 367l9 -5M967 187l7 -3M1049 185l9 -0M1090 237l5 -6M1199 565l6 2M838 155l6 -4M797 362l6 -6M1011 293l3 5M1085 302l5 3M1039 526l7 1M1336 437l4 -4M1171 567l6 3M918 104l4 -6M989 544l8 3M930 251l4 5M991 8l7 4M990 111l5 -4M1347 281l8 4M1109 290l6 -1M852 123l10 -4M818 97l10 -0M1285 144l6 3M1242 639l7 4M897 409l10 2M1051 167l7 -4M718 392l5 2" stroke="#c9d8f2" stroke-width="3.8" opacity=".85" fill="none"/>
<path d="M760 307l7 3M1227 563l5 -0M883 231l4 6M842 507l5 -5M865 346l4 9M1038 444l5 2M1438 340l7 3M839 321l9 1M1004 554l6 -1M1185 352l8 -5M1106 302l3 5M897 132l8 -2M691 634l3 6M1086 232l8 2M1084 286l5 1M1034 474l9 0M894 446l10 4M1070 139l5 -1M968 492l5 -2M889 59l6 -7M885 312l5 -3M1109 223l5 9M872 386l5 -5M1235 121l5 2M1251 570l6 -6M1048 484l7 -4M839 364l7 5M956 450l2 -5M1153 232l10 0M916 231l4 8M693 468l5 6M1195 549l5 -4M1158 238l4 -4M877 334l10 3M1084 306l8 -3M1255 555l9 -1M817 199l7 -7M961 469l6 -5M1222 327l6 -7M1166 307l6 -1M1103 317l7 -5M966 505l6 1M1155 385l7 1M1002 596l4 -5M1321 213l4 -7M1067 410l6 -6M837 215l7 1M1208 257l5 -4M916 447l7 4M931 391l4 -4M1199 310l10 1M914 102l9 3M861 106l8 -2M790 219l5 -6M856 337l5 -4M1362 435l10 4M1069 9l10 2M1164 257l10 3M1056 171l7 0M973 138l5 -6M998 78l5 -3M1412 396l5 -7M943 632l10 4M976 176l8 -6M1084 448l7 5M1315 471l6 -0M985 287l7 -5M951 514l6 4M1213 559l5 -3M1263 456l6 -4M1030 271l7 -5M879 186l9 -1M836 421l7 -2M1350 355l5 -3M1150 560l7 -1M1170 145l5 -0M985 391l8 -3M1398 488l10 -0M1040 554l5 5M886 26l5 6M923 336l4 -7M1179 288l8 0M782 193l7 6M1349 539l2 4M672 479l6 0M1220 270l5 8M1189 524l6 3M1272 383l7 -2M1268 340l9 2M1183 381l5 3M885 464l4 -8M997 237l5 1M1275 473l10 3M1016 398l9 -4M1153 198l9 -2M1129 112l9 1M1247 489l7 4M1087 104l5 -9M1011 342l8 -3M1108 155l3 -6M980 447l9 -0M1074 352l7 -0M940 237l5 1M998 31l5 -1M1244 543l5 6M920 569l4 -6M828 593l5 -7M872 596l5 7M842 299l6 -4M763 391l3 -5M1112 114l6 -0M1244 434l4 6M847 221l7 7M647 170l7 4M905 28l4 -7M1183 173l5 -7" stroke="#f0e0b0" stroke-width="3.8" opacity=".85" fill="none"/>
<path d="M797 412l10 -1M1324 149l5 -4M826 396l8 0M885 387l6 -1M1257 294l6 -5M1150 106l5 6M1122 321l6 4M1098 400l6 -1M1002 511l8 -2M959 321l5 2M830 61l5 1M1469 482l9 -2M1067 246l9 2M1255 153l5 3M945 268l6 7M736 431l6 1M1044 588l7 -6M1147 487l6 -5M1145 357l7 -1M899 510l4 5M871 339l5 4M936 537l5 -2M912 572l6 5M1219 407l7 6M1092 23l7 3M1225 344l5 -6M1281 256l7 4M734 516l4 -6M1083 289l4 -7M815 387l5 2M838 635l9 2M976 244l4 -4M780 312l6 5M1063 314l7 1M1204 514l3 -5M631 181l6 -1M1302 532l5 -4M1132 302l5 5M1189 134l7 4M743 374l6 -4M1154 492l4 5M953 347l8 1M876 42l5 -7M1457 384l6 9M891 539l4 6M986 288l3 -5M1108 374l5 -8M891 443l9 -5M1176 480l7 5M861 170l8 3M776 450l5 4M1025 90l6 3M991 263l5 -0M917 233l4 4M1158 404l10 1M1037 504l4 5M964 343l7 -2M1028 435l7 2M1113 599l4 -4M928 93l9 -1M616 387l5 -3M1045 287l5 -6M792 318l5 -4M1070 596l4 -5M803 193l4 8M705 396l6 -6M1162 531l5 7M1093 312l6 -2M774 166l2 -5M989 333l4 3M1270 151l9 -1M905 370l7 3M835 311l8 -3M1126 405l7 -1M874 627l8 -2M943 322l5 1M927 480l5 -4M894 490l10 1M1302 117l4 -4M827 485l8 1M1101 97l7 -1M869 155l8 -2M945 435l4 4M755 495l6 -2M1386 613l3 7M1526 262l9 -3M826 353l4 -4M1449 264l5 7M1232 222l4 3M939 253l3 -7M952 249l8 -0M879 520l4 -8M1077 33l7 -0M1008 305l9 -4M1182 219l10 3M1166 346l7 5M1137 350l4 7M1415 318l7 4M563 492l6 7M886 344l8 -1M719 413l5 1M1150 131l8 7M788 346l6 -1M801 536l5 -7M587 416l7 1M1105 365l9 2M994 379l6 -2M952 276l5 -5M654 351l9 -2M1044 577l4 5M1371 572l6 -3M1043 184l5 -0M1099 18l5 -6M1147 410l5 1M867 446l10 2M750 221l9 -1M794 608l7 -6M1288 403l4 -5M1073 482l8 -4" stroke="#ffffff" stroke-width="3.8" opacity=".85" fill="none"/>
<path d="M1106 243l9 -1M1421 324l9 -2M1112 594l6 -7M1002 423l4 9M1377 294l5 -6M1087 80l6 -3M1069 277l4 4M1312 383l6 5M1049 222l5 -0M1214 354l7 -5M1125 633l4 6M904 232l8 -5M930 605l9 -2M813 425l4 -7M1099 468l5 2M971 531l3 -5M1147 410l4 6M1080 640l5 -5M931 385l9 -5M1231 255l9 -2M1147 355l5 1M866 431l6 1M1119 421l5 5M783 532l4 -4M1355 287l2 5M989 289l5 -8M1120 392l6 3M813 324l6 6M768 126l10 2M1380 411l9 0M700 384l6 -4M1070 429l8 1M972 272l5 6M1158 511l9 -1M1071 330l4 6M1002 453l7 -5M985 453l7 5M1196 191l9 -6M895 492l7 -3M937 401l4 3M891 613l9 -5M845 293l6 4M807 384l4 5M830 56l6 9M862 537l6 8M894 395l6 2M1268 91l6 7M1228 418l8 2M948 281l5 1M1219 292l4 6M1149 251l3 5M1095 358l9 -0M1138 110l4 4M998 348l8 3M1220 464l4 -6M1048 230l8 2M972 304l3 -5M952 568l7 8M850 165l7 -2M941 376l6 4M1138 359l7 -6M1276 268l6 1M1098 550l8 -5M799 450l5 -2M782 296l5 -2M1195 279l9 0M720 436l10 2M1023 554l7 -2M1263 550l5 4M1164 628l9 5M1361 512l6 8M1156 219l5 1M972 358l5 1M1101 530l3 6M1149 398l5 6M1079 401l7 -3M1062 271l7 -2M927 470l6 3M920 48l5 7M899 448l8 -1M1167 372l7 1M1142 385l10 2M737 313l5 3M961 38l3 6M905 472l5 4M861 196l8 -2M1268 460l8 6M1256 389l10 1M633 358l3 7M820 71l6 -8M752 580l8 -5M999 352l4 5M973 167l9 0M1240 370l7 1M624 241l7 6M847 192l8 0M1023 397l8 -4M946 509l5 8M1007 322l7 -7M983 284l8 -1M801 272l4 6M764 272l8 -5M931 535l5 9" stroke="#d8b0a8" stroke-width="3.8" opacity=".85" fill="none"/>
<path d="M1004 370l7 -3M851 290l7 1M910 242l7 5M993 395l6 -7M1022 506l4 -4M1105 331l5 7M838 144l5 -5M902 257l5 -3M1056 419l8 -2M1044 432l5 -4M1015 178l4 3M1080 245l7 -4M1008 293l7 5M877 250l5 -6M969 541l4 -7M1075 285l4 3M971 442l3 5M885 264l9 0M997 554l8 4M982 341l6 -5M854 259l5 -5M936 324l6 3M1065 377l6 4M1015 227l5 1M865 548l6 5M1063 373l4 5M1077 283l6 0M1089 245l6 5M1006 395l6 -3M959 420l6 1M953 459l5 2M919 491l7 -3M1103 470l5 -3M856 338l3 -5M980 389l6 4M988 388l4 -4M950 281l6 -2M1169 731l5 -4M973 484l5 -7M997 444l6 3M1007 523l3 -5M1034 538l6 4M1080 236l7 0M970 603l7 -5M920 317l7 3M798 310l4 -4M956 443l5 5M955 478l7 2M1097 498l7 -3M938 495l7 0M996 509l5 2M861 429l8 -2M1023 135l5 2M872 416l7 -1M858 440l3 -4M928 642l8 2M1033 326l3 7M1075 281l6 -3M1109 305l6 -1M933 443l4 -5M993 395l4 4M980 367l3 7M1003 364l3 4M1047 346l4 -7M906 497l6 2M968 321l3 4M927 334l7 6M1001 515l5 -2M853 383l3 -4M1004 377l7 3M832 660l5 -6M895 294l5 7M1023 208l7 1M1150 413l8 -0M1085 304l4 -7M943 437l4 4M1084 403l6 6M930 493l8 4M938 426l3 -6M1011 635l5 0M1090 419l6 6M1011 27l6 6M1025 382l5 3M1157 510l4 7M968 492l3 -4M919 490l4 6M992 491l3 5M760 289l3 5M802 389l6 -4M971 347l8 -5" stroke="#2a2a48" stroke-width="3.2" opacity=".8" fill="none"/>
<g fill="#12122a"><ellipse cx="636" cy="558" rx="15" ry="18"/><path d="M604 600 Q636 578 668 600 L674 705 L600 705Z"/></g><ellipse cx="636" cy="546" rx="15" ry="11" fill="#6d6a78"/><path d="M640 672 L733 622 L737 629 L646 683Z" fill="#b9b3c6"/><g><ellipse cx="985" cy="562" rx="17" ry="21" fill="#c9b4b4"/><path d="M966 590 Q985 577 1006 590 L1012 700 L960 700Z" fill="#7d6f94"/><path d="M1002 582 L1030 505 L1038 508 L1015 592Z" fill="#c4b0b4"/></g><g><ellipse cx="1163" cy="553" rx="14" ry="17" fill="#b7a6ae"/><path d="M1138 590 Q1163 574 1190 590 L1195 690 L1134 690Z" fill="#34325a"/><path d="M1172 642 L1256 570 L1261 576 L1180 651Z" fill="#a89a8c"/></g>
<rect x="0" y="600" width="1995" height="531" fill="url(#fadeb)"/>
<g><path d="M691 742 Q694 698 704 654 L716 654 Q711 698 714 742Z" fill="#0a0b22"/><path d="M701 656 L697 640 L702 639 L705 650 L707 632 L711 632 L712 649 L716 635 L720 637 L719 656Z" fill="#0a0b22"/><path d="M731 742 Q734 718 730 694 L742 694 Q751 718 754 742Z" fill="#0a0b22"/><path d="M727 696 L723 680 L728 679 L731 690 L733 672 L737 672 L738 689 L742 675 L746 677 L745 696Z" fill="#0a0b22"/><path d="M789 742 Q792 692 804 642 L816 642 Q809 692 812 742Z" fill="#0a0b22"/><path d="M801 644 L797 628 L802 627 L805 638 L807 620 L811 620 L812 637 L816 623 L820 625 L819 644Z" fill="#0a0b22"/><path d="M857 742 Q860 694 854 646 L866 646 Q877 694 880 742Z" fill="#0a0b22"/><path d="M851 648 L847 632 L852 631 L855 642 L857 624 L861 624 L862 641 L866 627 L870 629 L869 648Z" fill="#0a0b22"/><path d="M907 742 Q910 682 922 622 L934 622 Q927 682 930 742Z" fill="#0a0b22"/><path d="M919 624 L915 608 L920 607 L923 618 L925 600 L929 600 L930 617 L934 603 L938 605 L937 624Z" fill="#0a0b22"/><path d="M993 742 Q996 707 1002 672 L1014 672 Q1013 707 1016 742Z" fill="#0a0b22"/><path d="M999 674 L995 658 L1000 657 L1003 668 L1005 650 L1009 650 L1010 667 L1014 653 L1018 655 L1017 674Z" fill="#0a0b22"/><path d="M1051 742 Q1054 711 1050 680 L1062 680 Q1071 711 1074 742Z" fill="#0a0b22"/><path d="M1047 682 L1043 666 L1048 665 L1051 676 L1053 658 L1057 658 L1058 675 L1062 661 L1066 663 L1065 682Z" fill="#0a0b22"/><path d="M1081 742 Q1084 696 1094 650 L1106 650 Q1101 696 1104 742Z" fill="#0a0b22"/><path d="M1091 652 L1087 636 L1092 635 L1095 646 L1097 628 L1101 628 L1102 645 L1106 631 L1110 633 L1109 652Z" fill="#0a0b22"/><path d="M1117 742 Q1120 667 1114 592 L1126 592 Q1137 667 1140 742Z" fill="#0a0b22"/><path d="M1111 594 L1107 578 L1112 577 L1115 588 L1117 570 L1121 570 L1122 587 L1126 573 L1130 575 L1129 594Z" fill="#0a0b22"/><path d="M1159 742 Q1162 666 1176 590 L1188 590 Q1179 666 1182 742Z" fill="#0a0b22"/><path d="M1173 592 L1169 576 L1174 575 L1177 586 L1179 568 L1183 568 L1184 585 L1188 571 L1192 573 L1191 592Z" fill="#0a0b22"/><path d="M1242 742 Q1245 692 1243 642 L1255 642 Q1262 692 1265 742Z" fill="#0a0b22"/><path d="M1240 644 L1236 628 L1241 627 L1244 638 L1246 620 L1250 620 L1251 637 L1255 623 L1259 625 L1258 644Z" fill="#0a0b22"/><path d="M1289 742 Q1292 694 1302 646 L1314 646 Q1309 694 1312 742Z" fill="#0a0b22"/><path d="M1299 648 L1295 632 L1300 631 L1303 642 L1305 624 L1309 624 L1310 641 L1314 627 L1318 629 L1317 648Z" fill="#0a0b22"/><path d="M1029 742 Q1032 714 1034 687 L1046 687 Q1049 714 1052 742Z" fill="#0a0b22"/><path d="M1031 689 L1027 673 L1032 672 L1035 683 L1037 665 L1041 665 L1042 682 L1046 668 L1050 670 L1049 689Z" fill="#0a0b22"/><ellipse cx="380" cy="713" rx="21" ry="24" fill="#0b0e2a"/><path d="M336 788 Q338 736 380 731 Q422 736 424 788Z" fill="#0b0e2a"/><ellipse cx="431" cy="714" rx="23" ry="27" fill="#0b0e2a"/><path d="M383 797 Q385 740 431 735 Q477 740 479 797Z" fill="#0b0e2a"/><ellipse cx="482" cy="707" rx="25" ry="29" fill="#0b0e2a"/><path d="M429 798 Q431 735 482 730 Q533 735 535 798Z" fill="#0b0e2a"/><ellipse cx="534" cy="708" rx="24" ry="27" fill="#0b0e2a"/><path d="M485 793 Q487 734 534 729 Q582 734 584 793Z" fill="#0b0e2a"/><ellipse cx="580" cy="707" rx="25" ry="29" fill="#0b0e2a"/><path d="M527 798 Q529 735 580 730 Q630 735 633 798Z" fill="#0b0e2a"/><ellipse cx="634" cy="700" rx="24" ry="28" fill="#0b0e2a"/><path d="M584 787 Q586 727 634 722 Q682 727 684 787Z" fill="#0b0e2a"/><ellipse cx="681" cy="710" rx="24" ry="27" fill="#0b0e2a"/><path d="M631 795 Q634 736 681 731 Q728 736 731 795Z" fill="#0b0e2a"/><ellipse cx="740" cy="718" rx="22" ry="25" fill="#0b0e2a"/><path d="M695 796 Q697 742 740 738 Q784 742 786 796Z" fill="#0b0e2a"/><ellipse cx="795" cy="708" rx="23" ry="26" fill="#0b0e2a"/><path d="M747 790 Q750 733 795 729 Q841 733 843 790Z" fill="#0b0e2a"/><ellipse cx="846" cy="709" rx="25" ry="29" fill="#0b0e2a"/><path d="M794 798 Q797 736 846 731 Q896 736 899 798Z" fill="#0b0e2a"/><ellipse cx="897" cy="700" rx="25" ry="28" fill="#0b0e2a"/><path d="M846 789 Q848 727 897 723 Q946 727 949 789Z" fill="#0b0e2a"/><ellipse cx="956" cy="720" rx="26" ry="30" fill="#0b0e2a"/><path d="M902 812 Q904 748 956 743 Q1007 748 1010 812Z" fill="#0b0e2a"/><ellipse cx="1004" cy="719" rx="26" ry="29" fill="#0b0e2a"/><path d="M951 812 Q953 748 1004 743 Q1056 748 1058 812Z" fill="#0b0e2a"/><ellipse cx="1058" cy="720" rx="24" ry="27" fill="#0b0e2a"/><path d="M1008 806 Q1010 746 1058 742 Q1106 746 1108 806Z" fill="#0b0e2a"/><ellipse cx="1113" cy="730" rx="25" ry="28" fill="#0b0e2a"/><path d="M1062 818 Q1064 757 1113 752 Q1162 757 1165 818Z" fill="#0b0e2a"/><ellipse cx="1168" cy="730" rx="22" ry="26" fill="#0b0e2a"/><path d="M1122 810 Q1124 754 1168 750 Q1213 754 1215 810Z" fill="#0b0e2a"/><ellipse cx="1220" cy="722" rx="21" ry="24" fill="#0b0e2a"/><path d="M1176 797 Q1178 745 1220 740 Q1261 745 1264 797Z" fill="#0b0e2a"/><ellipse cx="1264" cy="723" rx="21" ry="24" fill="#0b0e2a"/><path d="M1219 799 Q1221 746 1264 742 Q1306 746 1308 799Z" fill="#0b0e2a"/><ellipse cx="1319" cy="703" rx="23" ry="27" fill="#0b0e2a"/><path d="M1270 787 Q1273 729 1319 724 Q1366 729 1368 787Z" fill="#0b0e2a"/><ellipse cx="1375" cy="710" rx="26" ry="30" fill="#0b0e2a"/><path d="M1320 804 Q1323 739 1375 733 Q1427 739 1429 804Z" fill="#0b0e2a"/><ellipse cx="1422" cy="730" rx="22" ry="25" fill="#0b0e2a"/><path d="M1377 808 Q1379 753 1422 749 Q1465 753 1468 808Z" fill="#0b0e2a"/><ellipse cx="1482" cy="708" rx="20" ry="24" fill="#0b0e2a"/><path d="M1439 781 Q1441 730 1482 726 Q1523 730 1525 781Z" fill="#0b0e2a"/><ellipse cx="1527" cy="730" rx="26" ry="30" fill="#0b0e2a"/><path d="M1473 822 Q1476 758 1527 753 Q1579 758 1581 822Z" fill="#0b0e2a"/><ellipse cx="1587" cy="722" rx="27" ry="31" fill="#0b0e2a"/><path d="M1531 818 Q1534 751 1587 746 Q1640 751 1643 818Z" fill="#0b0e2a"/><ellipse cx="1633" cy="701" rx="21" ry="24" fill="#0b0e2a"/><path d="M1590 776 Q1592 724 1633 719 Q1675 724 1677 776Z" fill="#0b0e2a"/><rect x="0" y="720" width="1995" height="180" fill="url(#g19)"/><ellipse cx="-20" cy="786" rx="32" ry="37" fill="#090c24"/><path d="M-88 903 Q-85 822 -20 815 Q45 822 48 903Z" fill="#090c24"/><ellipse cx="62" cy="813" rx="39" ry="45" fill="#090c24"/><path d="M-20 953 Q-16 856 62 848 Q139 856 143 953Z" fill="#090c24"/><ellipse cx="143" cy="771" rx="41" ry="47" fill="#090c24"/><path d="M57 918 Q61 816 143 808 Q225 816 229 918Z" fill="#090c24"/><ellipse cx="226" cy="788" rx="40" ry="46" fill="#090c24"/><path d="M142 931 Q146 831 226 824 Q305 831 309 931Z" fill="#090c24"/><ellipse cx="300" cy="789" rx="35" ry="41" fill="#090c24"/><path d="M225 917 Q229 828 300 821 Q371 828 374 917Z" fill="#090c24"/><ellipse cx="382" cy="814" rx="37" ry="42" fill="#090c24"/><path d="M305 946 Q309 854 382 847 Q455 854 459 946Z" fill="#090c24"/><ellipse cx="475" cy="780" rx="35" ry="41" fill="#090c24"/><path d="M400 908 Q404 819 475 812 Q546 819 549 908Z" fill="#090c24"/><ellipse cx="557" cy="815" rx="36" ry="42" fill="#090c24"/><path d="M481 946 Q485 855 557 848 Q629 855 633 946Z" fill="#090c24"/><path d="M523 808 A36 42 0 0 1 591 808" fill="none" stroke="#3558b8" stroke-width="2.5" opacity="0.35"/><ellipse cx="645" cy="779" rx="40" ry="47" fill="#090c24"/><path d="M560 925 Q564 824 645 815 Q726 824 730 925Z" fill="#090c24"/><path d="M607 771 A40 47 0 0 1 684 771" fill="none" stroke="#3558b8" stroke-width="2.8" opacity="0.35"/><ellipse cx="726" cy="804" rx="40" ry="46" fill="#090c24"/><path d="M641 949 Q645 848 726 840 Q807 848 811 949Z" fill="#090c24"/><path d="M688 796 A40 46 0 0 1 764 796" fill="none" stroke="#3558b8" stroke-width="2.8" opacity="0.35"/><ellipse cx="811" cy="812" rx="34" ry="39" fill="#090c24"/><path d="M739 936 Q743 850 811 843 Q880 850 883 936Z" fill="#090c24"/><path d="M779 805 A34 39 0 0 1 844 805" fill="none" stroke="#3558b8" stroke-width="2.4" opacity="0.35"/><ellipse cx="893" cy="796" rx="35" ry="40" fill="#090c24"/><path d="M820 921 Q824 834 893 827 Q963 834 966 921Z" fill="#090c24"/><path d="M860 789 A35 40 0 0 1 926 789" fill="none" stroke="#3558b8" stroke-width="2.4" opacity="0.35"/><ellipse cx="976" cy="807" rx="38" ry="43" fill="#090c24"/><path d="M897 943 Q901 848 976 841 Q1052 848 1056 943Z" fill="#090c24"/><path d="M940 799 A38 43 0 0 1 1012 799" fill="none" stroke="#3558b8" stroke-width="2.6" opacity="0.35"/><ellipse cx="1069" cy="800" rx="34" ry="39" fill="#090c24"/><path d="M997 924 Q1000 838 1069 831 Q1137 838 1141 924Z" fill="#090c24"/><path d="M1036 793 A34 39 0 0 1 1101 793" fill="none" stroke="#3558b8" stroke-width="2.4" opacity="0.35"/><ellipse cx="1140" cy="786" rx="34" ry="39" fill="#090c24"/><path d="M1068 909 Q1071 824 1140 817 Q1208 824 1211 909Z" fill="#090c24"/><path d="M1107 779 A34 39 0 0 1 1172 779" fill="none" stroke="#3558b8" stroke-width="2.4" opacity="0.35"/><ellipse cx="1228" cy="782" rx="42" ry="48" fill="#090c24"/><path d="M1140 933 Q1144 828 1228 819 Q1312 828 1317 933Z" fill="#090c24"/><path d="M1189 773 A42 48 0 0 1 1268 773" fill="none" stroke="#3558b8" stroke-width="2.9" opacity="0.35"/><ellipse cx="1318" cy="770" rx="35" ry="41" fill="#090c24"/><path d="M1244 898 Q1248 809 1318 802 Q1389 809 1393 898Z" fill="#090c24"/><path d="M1285 763 A35 41 0 0 1 1352 763" fill="none" stroke="#3558b8" stroke-width="2.5" opacity="0.35"/><ellipse cx="1395" cy="792" rx="35" ry="40" fill="#090c24"/><path d="M1322 918 Q1325 831 1395 824 Q1465 831 1468 918Z" fill="#090c24"/><path d="M1362 786 A35 40 0 0 1 1428 786" fill="none" stroke="#3558b8" stroke-width="2.4" opacity="0.35"/><ellipse cx="1486" cy="802" rx="37" ry="43" fill="#090c24"/><path d="M1407 937 Q1411 843 1486 836 Q1561 843 1565 937Z" fill="#090c24"/><path d="M1450 795 A37 43 0 0 1 1522 795" fill="none" stroke="#3558b8" stroke-width="2.6" opacity="0.35"/><ellipse cx="1558" cy="793" rx="34" ry="39" fill="#090c24"/><path d="M1487 915 Q1490 831 1558 824 Q1625 831 1629 915Z" fill="#090c24"/><path d="M1526 787 A34 39 0 0 1 1590 787" fill="none" stroke="#3558b8" stroke-width="2.4" opacity="0.35"/><ellipse cx="1634" cy="811" rx="32" ry="37" fill="#090c24"/><path d="M1566 927 Q1569 846 1634 840 Q1698 846 1701 927Z" fill="#090c24"/><path d="M1603 804 A32 37 0 0 1 1664 804" fill="none" stroke="#3558b8" stroke-width="2.3" opacity="0.35"/><ellipse cx="1713" cy="810" rx="40" ry="46" fill="#090c24"/><path d="M1628 955 Q1632 854 1713 846 Q1794 854 1798 955Z" fill="#090c24"/><ellipse cx="1793" cy="814" rx="34" ry="39" fill="#090c24"/><path d="M1722 936 Q1726 851 1793 844 Q1861 851 1864 936Z" fill="#090c24"/><ellipse cx="1873" cy="795" rx="32" ry="37" fill="#090c24"/><path d="M1806 910 Q1809 830 1873 824 Q1937 830 1940 910Z" fill="#090c24"/><ellipse cx="1964" cy="800" rx="41" ry="47" fill="#090c24"/><path d="M1878 949 Q1882 845 1964 837 Q2047 845 2051 949Z" fill="#090c24"/><rect x="0" y="800" width="1995" height="200" fill="url(#g20)"/><ellipse cx="-30" cy="931" rx="61" ry="70" fill="#080a1c"/><path d="M-159 1152 Q-153 999 -30 986 Q93 999 99 1152Z" fill="#080a1c"/><path d="M-88 919 A61 70 0 0 1 28 919" fill="none" stroke="#2a55b8" stroke-width="4.3" opacity="0.4"/><ellipse cx="81" cy="884" rx="52" ry="59" fill="#080a1c"/><path d="M-28 1070 Q-23 940 81 930 Q184 940 189 1070Z" fill="#080a1c"/><path d="M31 873 A52 59 0 0 1 130 873" fill="none" stroke="#2a55b8" stroke-width="3.6" opacity="0.4"/><ellipse cx="214" cy="922" rx="61" ry="70" fill="#080a1c"/><path d="M86 1141 Q93 989 214 977 Q335 989 341 1141Z" fill="#080a1c"/><path d="M156 910 A61 70 0 0 1 271 910" fill="none" stroke="#2a55b8" stroke-width="4.2" opacity="0.4"/><ellipse cx="338" cy="878" rx="55" ry="63" fill="#080a1c"/><path d="M223 1075 Q229 938 338 927 Q448 938 453 1075Z" fill="#080a1c"/><ellipse cx="469" cy="909" rx="60" ry="69" fill="#080a1c"/><path d="M343 1125 Q349 975 469 963 Q588 975 594 1125Z" fill="#080a1c"/><ellipse cx="579" cy="881" rx="58" ry="67" fill="#080a1c"/><path d="M457 1091 Q462 945 579 933 Q696 945 702 1091Z" fill="#080a1c"/><ellipse cx="689" cy="903" rx="50" ry="57" fill="#080a1c"/><path d="M585 1082 Q590 958 689 948 Q788 958 793 1082Z" fill="#080a1c"/><ellipse cx="819" cy="895" rx="53" ry="61" fill="#080a1c"/><path d="M707 1087 Q712 954 819 943 Q926 954 931 1087Z" fill="#080a1c"/><ellipse cx="934" cy="897" rx="54" ry="62" fill="#080a1c"/><path d="M821 1090 Q826 956 934 945 Q1041 956 1046 1090Z" fill="#080a1c"/><path d="M883 886 A54 62 0 0 1 985 886" fill="none" stroke="#2a55b8" stroke-width="3.8" opacity="0.4"/><ellipse cx="1043" cy="895" rx="56" ry="64" fill="#080a1c"/><path d="M926 1095 Q932 956 1043 945 Q1154 956 1159 1095Z" fill="#080a1c"/><path d="M990 883 A56 64 0 0 1 1096 883" fill="none" stroke="#2a55b8" stroke-width="3.9" opacity="0.4"/><ellipse cx="1178" cy="886" rx="62" ry="71" fill="#080a1c"/><path d="M1048 1109 Q1055 954 1178 942 Q1302 954 1308 1109Z" fill="#080a1c"/><path d="M1120 874 A62 71 0 0 1 1237 874" fill="none" stroke="#2a55b8" stroke-width="4.3" opacity="0.4"/><ellipse cx="1312" cy="933" rx="51" ry="58" fill="#080a1c"/><path d="M1205 1116 Q1210 989 1312 979 Q1413 989 1418 1116Z" fill="#080a1c"/><path d="M1264 923 A51 58 0 0 1 1360 923" fill="none" stroke="#2a55b8" stroke-width="3.6" opacity="0.4"/><ellipse cx="1434" cy="910" rx="60" ry="69" fill="#080a1c"/><path d="M1307 1127 Q1313 977 1434 964 Q1555 977 1561 1127Z" fill="#080a1c"/><path d="M1377 898 A60 69 0 0 1 1491 898" fill="none" stroke="#2a55b8" stroke-width="4.2" opacity="0.4"/><ellipse cx="1562" cy="921" rx="54" ry="62" fill="#080a1c"/><path d="M1448 1115 Q1454 980 1562 969 Q1670 980 1675 1115Z" fill="#080a1c"/><path d="M1510 910 A54 62 0 0 1 1613 910" fill="none" stroke="#2a55b8" stroke-width="3.8" opacity="0.4"/><ellipse cx="1679" cy="907" rx="58" ry="67" fill="#080a1c"/><path d="M1557 1117 Q1563 971 1679 960 Q1795 971 1801 1117Z" fill="#080a1c"/><path d="M1624 896 A58 67 0 0 1 1734 896" fill="none" stroke="#2a55b8" stroke-width="4.1" opacity="0.4"/><ellipse cx="1794" cy="903" rx="55" ry="63" fill="#080a1c"/><path d="M1679 1100 Q1684 963 1794 952 Q1904 963 1909 1100Z" fill="#080a1c"/><path d="M1742 892 A55 63 0 0 1 1846 892" fill="none" stroke="#2a55b8" stroke-width="3.8" opacity="0.4"/><ellipse cx="1927" cy="917" rx="54" ry="62" fill="#080a1c"/><path d="M1813 1113 Q1819 977 1927 966 Q2036 977 2041 1113Z" fill="#080a1c"/><path d="M1876 907 A54 62 0 0 1 1979 907" fill="none" stroke="#2a55b8" stroke-width="3.8" opacity="0.4"/><rect x="0" y="930" width="1995" height="170" fill="url(#g21)"/><ellipse cx="-40" cy="1020" rx="80" ry="92" fill="#05060e"/><path d="M-208 1308 Q-200 1108 -40 1092 Q120 1108 128 1308Z" fill="#05060e"/><ellipse cx="113" cy="1019" rx="74" ry="86" fill="#05060e"/><path d="M-43 1287 Q-35 1101 113 1086 Q262 1101 270 1287Z" fill="#05060e"/><ellipse cx="264" cy="1047" rx="86" ry="99" fill="#05060e"/><path d="M83 1357 Q92 1142 264 1124 Q436 1142 445 1357Z" fill="#05060e"/><ellipse cx="457" cy="1015" rx="84" ry="96" fill="#05060e"/><path d="M282 1315 Q290 1107 457 1090 Q624 1107 632 1315Z" fill="#05060e"/><ellipse cx="613" cy="1018" rx="77" ry="88" fill="#05060e"/><path d="M452 1294 Q459 1102 613 1087 Q766 1102 774 1294Z" fill="#05060e"/><ellipse cx="793" cy="1067" rx="87" ry="100" fill="#05060e"/><path d="M611 1379 Q620 1162 793 1145 Q966 1162 975 1379Z" fill="#05060e"/><ellipse cx="958" cy="1046" rx="85" ry="97" fill="#05060e"/><path d="M780 1350 Q789 1139 958 1122 Q1127 1139 1136 1350Z" fill="#05060e"/><ellipse cx="1114" cy="1067" rx="73" ry="84" fill="#05060e"/><path d="M960 1331 Q968 1147 1114 1133 Q1261 1147 1268 1331Z" fill="#05060e"/><path d="M1045 1052 A73 84 0 0 1 1184 1052" fill="none" stroke="#2458c8" stroke-width="5.1" opacity="0.45"/><ellipse cx="1309" cy="1016" rx="72" ry="83" fill="#05060e"/><path d="M1158 1275 Q1165 1095 1309 1081 Q1452 1095 1460 1275Z" fill="#05060e"/><path d="M1240 1002 A72 83 0 0 1 1377 1002" fill="none" stroke="#2458c8" stroke-width="5.0" opacity="0.45"/><ellipse cx="1476" cy="1062" rx="73" ry="84" fill="#05060e"/><path d="M1322 1325 Q1330 1143 1476 1128 Q1622 1143 1629 1325Z" fill="#05060e"/><path d="M1406 1047 A73 84 0 0 1 1545 1047" fill="none" stroke="#2458c8" stroke-width="5.1" opacity="0.45"/><ellipse cx="1630" cy="1076" rx="72" ry="83" fill="#05060e"/><path d="M1479 1335 Q1486 1155 1630 1141 Q1774 1155 1781 1335Z" fill="#05060e"/><path d="M1562 1062 A72 83 0 0 1 1698 1062" fill="none" stroke="#2458c8" stroke-width="5.0" opacity="0.45"/><ellipse cx="1786" cy="1052" rx="84" ry="96" fill="#05060e"/><path d="M1610 1354 Q1619 1144 1786 1127 Q1954 1144 1962 1354Z" fill="#05060e"/><path d="M1707 1035 A84 96 0 0 1 1866 1035" fill="none" stroke="#2458c8" stroke-width="5.9" opacity="0.45"/><ellipse cx="1944" cy="1022" rx="85" ry="98" fill="#05060e"/><path d="M1765 1329 Q1774 1116 1944 1099 Q2115 1116 2123 1329Z" fill="#05060e"/><path d="M1863 1005 A85 98 0 0 1 2025 1005" fill="none" stroke="#2458c8" stroke-width="6.0" opacity="0.45"/></g>
<g fill="none" stroke="#2458c8" stroke-width="4" opacity=".6" filter="url(#b3)"><path d="M1420 880 q40 -60 100 -30"/><path d="M1830 980 q60 -70 140 -20"/><path d="M1120 1010 q50 -50 110 -20"/><path d="M1700 1090 q50 -40 120 -10"/><path d="M40 900 q30 -60 70 -80"/><path d="M1880 920 q50 -50 100 -40"/><path d="M1500 960 q30 -50 90 -40"/><path d="M1290 1060 q40 -40 100 -20"/></g>
<ellipse cx="1500" cy="960" rx="420" ry="150" fill="#12245c" opacity=".35" filter="url(#b50)"/>
<rect x="0" y="820" width="1995" height="311" fill="url(#botd)"/>
<rect width="1995" height="1131" fill="url(#vg)"/></symbol></svg>
<div class="win"><div class="in">
<!-- tab strip -->
<div class="abs" style="left:517px;top:299px;width:82px;height:81px;border-radius:24px;background:#e9f0fd"></div>
<svg style="left:541px;top:327px" width="34" height="26" viewBox="0 0 34 26"><path d="M7.8 7.2 L17 16.4 L26.2 7.2" fill="none" stroke="#1f1f1f" stroke-width="4.6"/></svg>
<div class="chip" style="left:617px;width:181px;background:#a142f4;color:#fff">Âm nhạc</div>
<div class="chip" style="left:828px;width:225px;background:#f9ab00;color:#202124;font-size:35.9px">Trường học</div>
<div class="chip" style="left:1083px;width:236px;background:#2080f8;color:#fff">Mạng xã hội</div>
<div class="ul" style="left:623px;width:169px;background:#a142f4"></div>
<div class="ul" style="left:834px;width:213px;background:#f9ab00"></div>
<div class="ul" style="left:1089px;width:224px;background:#2080f8"></div>
<!-- active tab -->
<svg style="left:1332px;top:298px" width="712" height="104" viewBox="0 0 712 104"><path d="M0 104 V101 A28 28 0 0 0 28 73 V26 A26 26 0 0 1 54 0 H651 A26 26 0 0 1 677 26 V73 A28 28 0 0 0 705 101 H712 V104 Z" fill="#fff"/></svg>
<svg style="left:1386.5px;top:325px" width="42" height="29.5" viewBox="0 0 42 29.5"><rect width="42" height="29.5" rx="8" fill="#f00"/><path d="M16.5 8.2 L27.8 14.75 L16.5 21.3Z" fill="#fff"/></svg>
<div class="t" style="left:1449px;top:323px;font-size:35.75px;color:#1f1f1f;-webkit-text-stroke:.4px #1f1f1f">YouTube</div>
<svg style="left:1950px;top:328.5px" width="23" height="23" viewBox="0 0 23 23"><path d="M2 2 L21 21 M21 2 L2 21" stroke="#1f1f1f" stroke-width="4.4" fill="none"/></svg>
<svg style="left:2060px;top:326.5px" width="27" height="27" viewBox="0 0 27 27"><path d="M13.5 0 V27 M0 13.5 H27" stroke="#1f1f1f" stroke-width="4.4" fill="none"/></svg>
<!-- window controls -->
<div class="abs" style="left:3028px;top:336.5px;width:36px;height:6.5px;background:#1566e0"></div>
<div class="abs" style="left:3148px;top:320.5px;width:37px;height:37px;border:6px solid #1566e0"></div>
<svg style="left:3265px;top:322.5px" width="34" height="34" viewBox="0 0 34 34"><path d="M2 2 L32 32 M32 2 L2 32" stroke="#1566e0" stroke-width="6" fill="none"/></svg>
<!-- toolbar -->
<div class="abs" style="left:499px;top:399px;width:2842px;height:115px;background:#fff;border-radius:22px 22px 0 0"></div>
<div class="abs" style="left:499px;top:512px;width:2842px;height:2.5px;background:#e9e9ea"></div>
<div class="abs" style="left:499px;top:514px;width:2842px;height:1364px;background:#fff"></div>
<!-- nav icons -->
<svg style="left:536px;top:437px" width="36" height="36" viewBox="0 0 36 36"><path d="M33.5 18 H3.5 M17.5 3.2 L2.7 18 L17.5 32.8" fill="none" stroke="#474747" stroke-width="3.1"/></svg>
<svg style="left:622.5px;top:437px" width="36" height="36" viewBox="0 0 36 36"><path d="M2.5 18 H32.5 M18.5 3.2 L33.3 18 L18.500 32.8" fill="none" stroke="#b0b0b0" stroke-width="3.1"/></svg>
<svg style="left:712px;top:437px" width="38" height="38" viewBox="0 0 38 38"><path d="M32.2 21.5 A14.3 14.3 0 1 1 27.5 8" fill="none" stroke="#474747" stroke-width="3.2"/><path d="M32.500 2.5 V13.3 H21.7" fill="none" stroke="#474747" stroke-width="3.2"/></svg>
<!-- omnibox -->
<div class="abs" style="left:795px;top:415.5px;width:2198px;height:81px;border-radius:41px;background:#eceff7"></div>
<div class="abs" style="left:805px;top:425px;width:61px;height:61px;border-radius:50%;background:#fff"></div>
<svg style="left:819px;top:441px" width="32" height="30" viewBox="0 0 32 30"><circle cx="6.6" cy="6.5" r="4.9" fill="none" stroke="#474747" stroke-width="3.2"/><path d="M16.5 6.5 H31" stroke="#474747" stroke-width="3.2"/><circle cx="25.4" cy="23" r="4.9" fill="none" stroke="#474747" stroke-width="3.2"/><path d="M1 23 H15.5" stroke="#474747" stroke-width="3.2"/></svg>
<div class="t" style="left:885px;top:436px;font-size:35.9px;color:#1f1f1f">youtube.com<span style="color:#474747">/watch/</span></div>
<svg style="left:2917px;top:434.2px" width="46" height="44" viewBox="0 0 24 24"><path d="M12 3.6 L14.5 9.4 L20.8 9.95 L16 14.1 L17.45 20.3 L12 17 L6.55 20.3 L8 14.1 L3.2 9.95 L9.5 9.4 Z" fill="none" stroke="#474747" stroke-width="1.9" stroke-linejoin="miter"/></svg>
<!-- extensions puzzle -->
<svg style="left:3036px;top:432px" width="46" height="44" viewBox="0 0 46 44"><path d="M5 18.7 V10.5 a2 2 0 0 1 2 -2 H34 a2 2 0 0 1 2 2 V37.7 a2 2 0 0 1 -2 2 H7 a2 2 0 0 1 -2 -2 V29.7 A5.5 5.5 0 0 0 5 18.7 Z" fill="none" stroke="#474747" stroke-width="3.8"/><path d="M15.6 8.5 a5.2 5.2 0 0 1 10.4 0Z M36 19 a5.2 5.2 0 0 1 0 10.4Z" fill="#474747"/></svg>
<!-- youtube header -->
<svg style="left:545px;top:545px" width="32" height="24" viewBox="0 0 32 24"><path d="M0 2 H31 M0 12.2 H31 M0 22.4 H31" stroke="#0f0f0f" stroke-width="2.2"/></svg>
<svg style="left:622px;top:541.5px" width="48" height="33" viewBox="0 0 48 33"><rect width="48" height="33" rx="9" fill="#f00"/><path d="M19 9 L31.5 16.5 L19 24Z" fill="#fff"/></svg>
<div class="t" style="left:676px;top:538px;font-size:41px;font-weight:bold;color:#212121;letter-spacing:-1.6px;-webkit-text-stroke:1.5px #212121;transform:scaleX(.625);transform-origin:0 0">YouTube</div>
<!-- search -->
<div class="abs" style="left:1431px;top:524px;width:1023px;height:67.5px;border-radius:34px;border:2px solid #d0d0d0;background:#fff"></div>
<div class="abs" style="left:2346px;top:526px;width:106px;height:63.5px;border-radius:0 32px 32px 0;border-left:2px solid #d0d0d0;background:#f8f8f8"></div>
<div class="t" style="left:1459px;top:544.5px;font-size:26.4px;color:#a0a0a0">Tìm kiếm</div>
<svg style="left:2382px;top:541px" width="36" height="36" viewBox="0 0 36 36"><circle cx="15.5" cy="15.5" r="13" fill="none" stroke="#0f0f0f" stroke-width="2.4"/><path d="M25 25 L33.5 33.5" stroke="#0f0f0f" stroke-width="2.4"/></svg>
<div class="abs" style="left:2488px;top:528px;width:60px;height:60px;border-radius:50%;background:#f2f2f2"></div>
<svg style="left:2504px;top:541px" width="28" height="40" viewBox="0 0 28 40"><rect x="9.5" y="2" width="9" height="22" rx="4.5" fill="#0f0f0f"/><path d="M3 17 A11 11 0 0 0 25 17 M14 28 V37" fill="none" stroke="#0f0f0f" stroke-width="2.4"/></svg>
<!-- video -->
<div class="abs" style="left:615px;top:640px;width:1995px;height:1131px;border-radius:22px;overflow:hidden;background:#0b071c">
<svg style="left:0;top:0" width="1995" height="1131"><use href="#concert"/></svg>
</div>
<div class="t" style="left:620px;top:1793.7px;font-size:40.75px;color:#0f0f0f">Buổi hoà nhạc trực tiếp – Palm Springs</div>
<!-- sidebar skeleton -->
<!--SK0-->
<div class="sk" style="left:2647.5px;top:879.8px;width:287.5px;height:166px"></div>
<div class="sk" style="left:2647.5px;top:1063px;width:287.5px;height:166px"></div>
<div class="sk" style="left:2647.5px;top:1242.3px;width:287.5px;height:166px"></div>
<div class="sk" style="left:2647.5px;top:1421.5px;width:287.5px;height:170.5px"></div>
<div class="sk" style="left:2647.5px;top:1600.7px;width:287.5px;height:165.3px"></div>
<div class="sk" style="left:2647.5px;top:1776.6px;width:287.5px;height:166px"></div>
<div class="sb" style="left:2943px;top:1067px;width:287.4px;height:32.6px;border-radius:16.3px"></div>
<div class="sb" style="left:2943px;top:1102.6px;width:343px;height:34.4px;border-radius:17.2px"></div>
<div class="sb" style="left:2943px;top:1141.5px;width:152.3px;height:26.5px;border-radius:13.25px"></div>
<div class="sb" style="left:2943px;top:1173.4px;width:229px;height:25.2px;border-radius:12.6px"></div>
<div class="sb" style="left:2943px;top:1241.7px;width:287.4px;height:32.8px;border-radius:16.4px"></div>
<div class="sb" style="left:2943px;top:1279.6px;width:343px;height:33.4px;border-radius:16.7px"></div>
<div class="sb" style="left:2943px;top:1320.6px;width:152.3px;height:25.9px;border-radius:12.95px"></div>
<div class="sb" style="left:2943px;top:1355px;width:251px;height:25.8px;border-radius:12.9px"></div>
<div class="sb" style="left:2943px;top:1431.5px;width:287.4px;height:33.1px;border-radius:16.55px"></div>
<div class="sb" style="left:2943px;top:1469.5px;width:208.6px;height:25.9px;border-radius:12.95px"></div>
<div class="sb" style="left:2943px;top:1605.3px;width:355.3px;height:33.2px;border-radius:16.6px"></div>
<div class="sb" style="left:2943px;top:1643.4px;width:307.3px;height:33.1px;border-radius:16.55px"></div>
<div class="sb" style="left:2943px;top:1682.5px;width:153px;height:25.5px;border-radius:12.75px"></div>
<div class="sb" style="left:2943px;top:1713px;width:335px;height:26.5px;border-radius:13.25px"></div>
<div class="sb" style="left:2943px;top:1776.6px;width:335px;height:32.4px;border-radius:16.2px"></div>
<div class="sb" style="left:2943px;top:1814px;width:307.3px;height:32.4px;border-radius:16.2px"></div>
<div class="sb" style="left:2943px;top:1853px;width:153px;height:26px;border-radius:13.0px"></div>
<!--SK1-->
<div class="scrim"></div>
<div class="abs" style="left:2508px;top:557px;width:801px;height:471.5px;border-radius:17px;box-shadow:0 10px 50px rgba(0,0,0,.22)"></div>
</div></div>
<!-- avatar -->
<svg style="left:3255.4px;top:431.8px" width="49" height="49" viewBox="0 0 49 49"><defs><clipPath id="avc"><circle cx="24.5" cy="24.5" r="24.4"/></clipPath></defs><g clip-path="url(#avc)"><rect width="49" height="49" fill="#9f9fa1"/><rect x="0" y="10" width="12" height="30" fill="#a8a8aa"/><rect x="36" y="6" width="13" height="34" fill="#a6a6a8"/><ellipse cx="24.3" cy="12" rx="10.2" ry="10" fill="#2a2627"/><ellipse cx="24.3" cy="21.5" rx="8.4" ry="11.2" fill="#5c4038"/><path d="M20.8 30 h7 v9 h-7Z" fill="#5c4037"/><path d="M3 50 Q5 37 19.5 34.5 L24.3 46 L29 34.5 Q43.500 37 46 50Z" fill="#aeaeb0"/><path d="M21.500 35 L24.3 45 L27 35Z" fill="#5c4037"/></g></svg>
<!-- cast pill -->
<div class="abs" style="left:651px;top:1601.5px;width:744px;height:121.5px;border-radius:61px;background:#202227"></div>
<svg style="left:720px;top:1641.7px" width="51" height="42" viewBox="0 0 51 42"><path d="M2.5 9.5 V6.5 A4 4 0 0 1 6.5 2.5 H44.5 A4 4 0 0 1 48.5 6.5 V35.5 A4 4 0 0 1 44.5 39.5 H31.5" fill="none" stroke="#fff" stroke-width="5"/><path d="M0 35.6 A6.4 6.4 0 0 1 6.4 42 H0Z" fill="#fff"/><path d="M0 30.3 A11.7 11.7 0 0 1 11.7 42 M0 20.6 A21.4 21.4 0 0 1 21.4 42" fill="none" stroke="#fff" stroke-width="5.2"/></svg>
<div class="t" style="left:806px;top:1645px;font-size:36.73px;color:#fff">Đang phát trên TV phòng khách</div>
<!-- media button -->
<div class="abs" style="left:3116px;top:398.5px;width:115px;height:115px;border-radius:50%;background:#e8e9ed;box-shadow:0 6px 28px rgba(0,0,0,.28)"></div>
<svg style="left:3146px;top:437.2px" width="56" height="44" viewBox="0 0 56 44"><path d="M0 7 H34 M0 18.2 H34 M0 29.4 H22.5" stroke="#000" stroke-width="5" fill="none"/><path d="M39 4.5 H54.5 V10 H45.5 V34.5 A8.6 8.6 0 1 1 39 26.2 Z" fill="#000"/></svg>
<!-- popup -->
<div class="abs" style="left:2508px;top:557px;width:801px;height:471.5px;border-radius:17px;overflow:hidden;background:#fff">
 <div class="abs" style="left:0;top:0;width:801px;height:264.5px;background:#050812;overflow:hidden">
  <svg style="left:334px;top:-21.5px" width="573" height="325"><use href="#concert"/></svg>
  <div class="abs" style="left:0;top:0;width:484px;height:265px;background:linear-gradient(90deg,#050812 0,#050812 432px,rgba(5,8,18,0) 484px)"></div>
  <div class="abs" style="left:40.5px;top:38.5px;width:57.5px;height:16.5px;border-radius:9px;background:#cdd1fb"></div>
  <div class="abs" style="left:40.5px;top:88px;width:257px;height:16px;border-radius:9px;background:#cdd1fb"></div>
  <div class="abs" style="left:40.5px;top:115px;width:134px;height:18px;border-radius:9px;background:#cdd1fb"></div>
  <svg style="left:48px;top:191px" width="40" height="25" viewBox="0 0 40 25"><path d="M18 1.5 V23.5 L1 12.5Z M38.5 1.5 V23.5 L21.5 12.5Z" fill="#cdd1fb" stroke="#cdd1fb" stroke-width="2" stroke-linejoin="round"/></svg>
  <svg style="left:136px;top:189px" width="27" height="29" viewBox="0 0 27 29"><path d="M2 2 V27 L25 14.5Z" fill="#cdd1fb" stroke="#cdd1fb" stroke-width="2.4" stroke-linejoin="round"/></svg>
  <svg style="left:206.5px;top:191px" width="40" height="25" viewBox="0 0 40 25"><path d="M1.5 1.5 V23.5 L18.5 12.5Z M22 1.5 V23.5 L39 12.5Z" fill="#cdd1fb" stroke="#cdd1fb" stroke-width="2" stroke-linejoin="round"/></svg>
  <div class="abs" style="left:276.5px;top:178.5px;width:3.6px;height:50.5px;border-radius:2px;background:#cdd1fb"></div>
  <svg style="left:307px;top:181.5px" width="47" height="38" viewBox="0 0 47 38"><path d="M23 2.2 H44.8 V20 M19 35.8 H2.2 V14" fill="none" stroke="#cdd1fb" stroke-width="3.6"/><rect x="27" y="24" width="20" height="14" fill="#cdd1fb"/><path d="M1.5 1.5 L14 14 M3 14 H14.5 V2.5" fill="none" stroke="#cdd1fb" stroke-width="3.4"/></svg>
 </div>
 <!-- row 1 -->
 <svg style="left:47.5px;top:299px" width="45" height="36" viewBox="0 0 45 36"><rect x="2.5" y="2.5" width="40" height="31" rx="2" fill="none" stroke="#000" stroke-width="4.6"/><path d="M9 16 H12.5 M16 16 H36 M9 23.5 H29 M32.5 23.5 H36" stroke="#000" stroke-width="3"/></svg>
 <div class="t" style="left:124.5px;top:299px;font-size:34.56px;color:#1f1f1f">Phụ đề trực tiếp</div>
 <div class="abs" style="left:707px;top:304.5px;width:49.5px;height:26.5px;border-radius:14px;border:4.6px solid #000"></div>
 <div class="abs" style="left:713px;top:310.5px;width:14.5px;height:14.5px;border-radius:50%;background:#000"></div>
 <div class="abs" style="left:0;top:368.7px;width:801px;height:1.6px;background:#7f8bd0"></div>
 <!-- row 2 -->
 <svg style="left:42.2px;top:392.9px" width="55" height="55" viewBox="0 0 24 24"><path d="M19.43 12.98c.04-.32.07-.64.07-.98s-.03-.66-.07-.98l2.11-1.65c.19-.15.24-.42.12-.64l-2-3.46a.5.5 0 0 0-.61-.22l-2.49 1a7.3 7.3 0 0 0-1.69-.98l-.38-2.65A.49.49 0 0 0 14 2h-4a.49.49 0 0 0-.49.42l-.38 2.65c-.61.25-1.17.59-1.69.98l-2.49-1a.5.5 0 0 0-.61.22l-2 3.46c-.13.22-.07.49.12.64l2.11 1.65c-.04.32-.07.65-.07.98s.03.66.07.98l-2.11 1.65a.5.5 0 0 0-.12.64l2 3.46c.12.22.39.3.61.22l2.49-1c.52.4 1.08.73 1.69.98l.38 2.65c.03.24.24.42.49.42h4c.25 0 .46-.18.49-.42l.38-2.65c.61-.25 1.17-.59 1.69-.98l2.49 1c.23.09.49 0 .61-.22l2-3.46a.5.5 0 0 0-.12-.64l-2.11-1.65zm-1.98-1.71c.04.31.05.52.05.73s-.02.43-.05.73l-.14 1.13.89.7 1.08.84-.7 1.21-1.27-.51-1.04-.42-.9.68c-.43.32-.84.56-1.25.73l-1.06.43-.16 1.13-.2 1.35h-1.4l-.19-1.35-.16-1.13-1.06-.43c-.43-.18-.83-.41-1.23-.71l-.91-.7-1.06.43-1.27.51-.7-1.21 1.08-.84.89-.7-.14-1.13c-.03-.31-.05-.54-.05-.74s.02-.43.05-.73l.14-1.13-.89-.7-1.08-.84.7-1.21 1.27.51 1.04.42.9-.68c.43-.32.84-.56 1.25-.73l1.06-.43.16-1.13.2-1.35h1.39l.19 1.35.16 1.13 1.06.43c.43.18.83.41 1.23.71l.91.7 1.06-.43 1.27-.51.7 1.21-1.07.85-.89.7.14 1.13z" fill="#000"/><circle cx="12" cy="12" r="3.4" fill="#000"/></svg>
 <div class="t" style="left:124.5px;top:402px;font-size:34.13px;color:#1f1f1f">Cài đặt phụ đề</div>
 <svg style="left:726px;top:400.5px" width="41" height="41" viewBox="0 0 41 41"><path d="M17 2.3 H4.3 A2 2 0 0 0 2.3 4.3 V36.7 A2 2 0 0 0 4.3 38.7 H36.7 A2 2 0 0 0 38.7 36.7 V22.5" fill="none" stroke="#000" stroke-width="4.6"/><path d="M22 2.3 H38.7 V18.5 M38 3 L14 27" fill="none" stroke="#000" stroke-width="4.4"/></svg>
</div>

</body></html>
